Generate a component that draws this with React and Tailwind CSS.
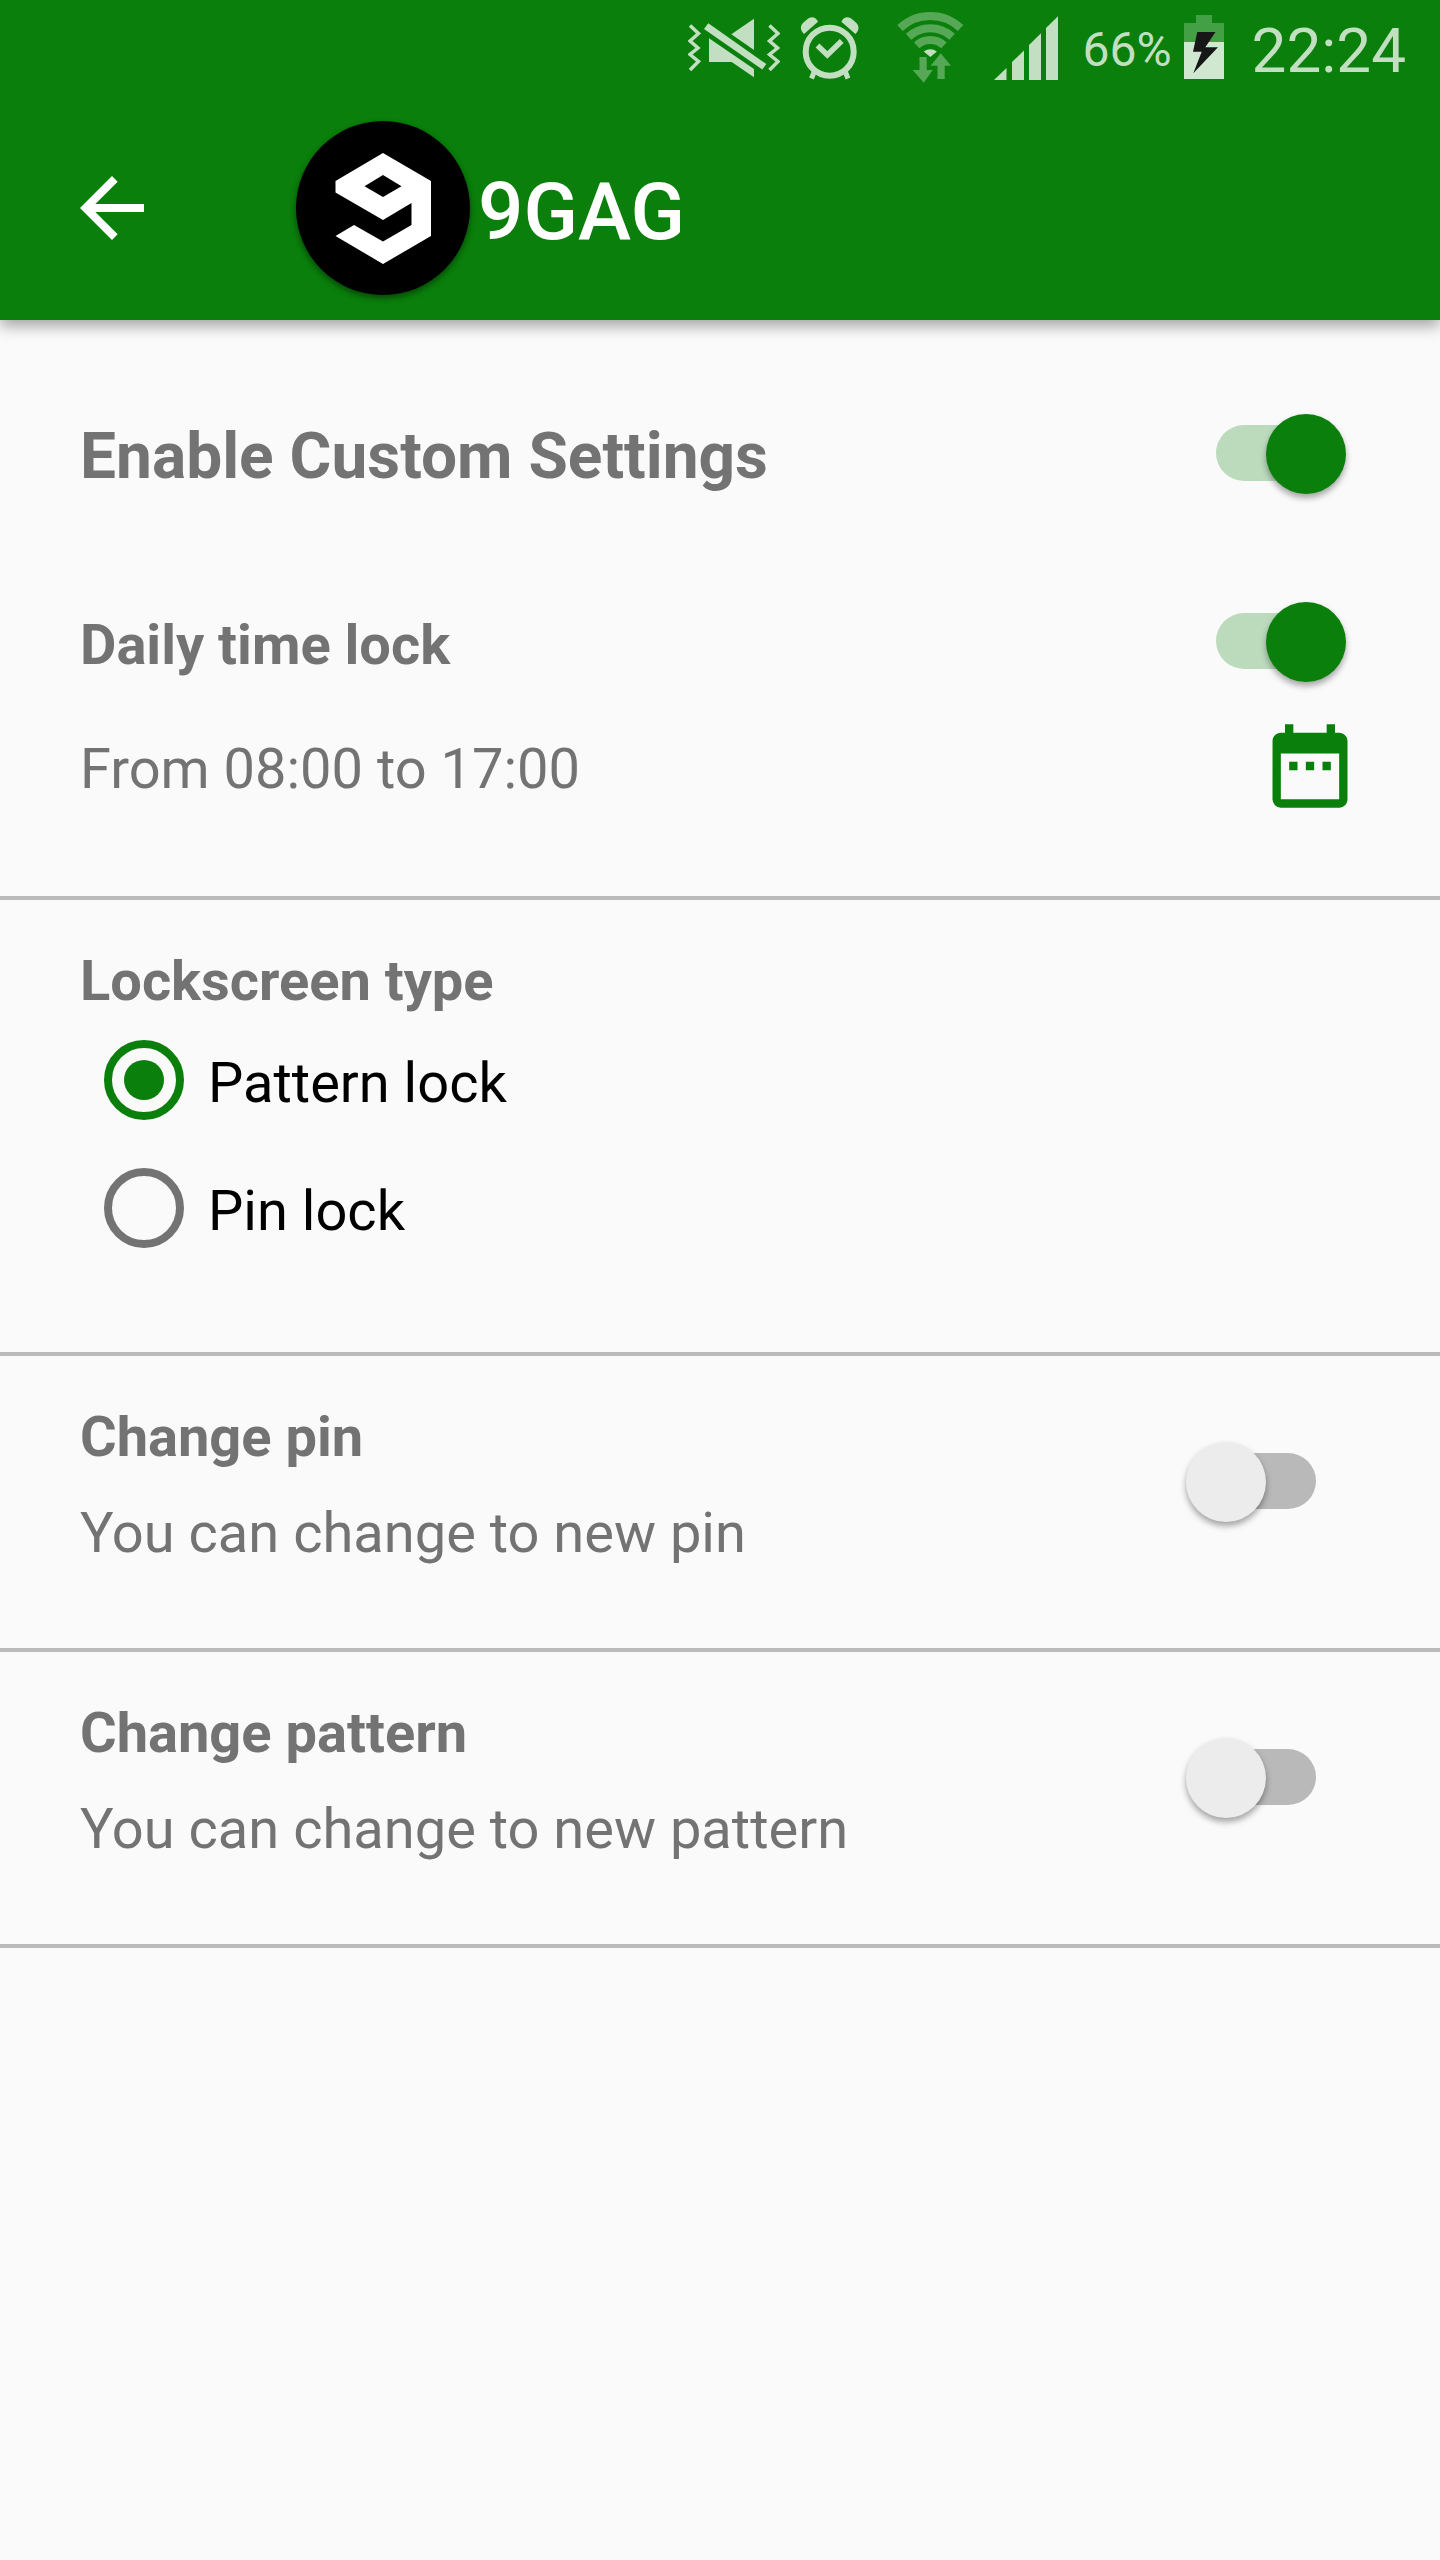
import { useState } from 'react';
import { MdArrowBack, MdDateRange } from 'react-icons/md';

function VibrateIcon() {
  const zigzag = 'M2 25.5 10.5 33.5 2 41 10 48 2 54.5 10.5 61.5 2 70';
  return (
    <svg className="h-24 w-[92px]" viewBox="0 0 92 96" fill="currentColor" aria-hidden="true">
      <path d={zigzag} fill="none" stroke="currentColor" strokeWidth="3.5" />
      <path d={zigzag} transform="translate(79.5 0)" fill="none" stroke="currentColor" strokeWidth="3.5" />
      <path d="M20.3 23.3 78.3 64 74.3 69.6 16 29Z" />
      <path d="M66 18.7V50L43.3 34.3Z" />
      <path d="M21 38.3 66 69V77.3L43.7 62H21Z" />
    </svg>
  );
}

function AlarmIcon() {
  return (
    <svg className="h-24 w-[60px]" viewBox="0 0 60 96" fill="none" stroke="currentColor" aria-hidden="true">
      <circle cx="29.7" cy="51.7" r="24" strokeWidth="6" />
      <path d="M17.5 45.5 27.3 55 41.7 41" strokeWidth="5.5" />
      <path d="M14.5 71 11.5 78.5M45 71 48 78.5" strokeWidth="5" />
      <path d="M4 34 18 21.7C15.5 16.5 11 16 7 19.5L3.5 22.5C-.5 26 .5 31 4 34Z" fill="currentColor" stroke="none" />
      <path d="M55.4 34 41.4 21.7C43.9 16.5 48.4 16 52.4 19.5L55.9 22.5C59.9 26 58.9 31 55.4 34Z" fill="currentColor" stroke="none" />
    </svg>
  );
}

function WifiIcon() {
  return (
    <svg className="h-24 w-[68px]" viewBox="0 0 68 96" fill="none" aria-hidden="true">
      <g stroke="#56a856" strokeWidth="8">
        <path d="M4 28A44 44 0 0 1 64.6 28" />
        <path d="M12.5 36.7A32 32 0 0 1 56.1 36.7" />
        <path d="M20.7 45.4A20 20 0 0 1 47.9 45.4" />
      </g>
      <path d="M27.7 51.5A12 12 0 0 1 40.9 51.5L34.3 57Z" fill="#c2dfc2" />
      <path d="M23.5 57H30.7V70H36.7L27.7 82.7 16.7 70H23.5Z" fill="#56a856" />
      <path d="M44.7 53.3 55 65.7H48.7V79H41.5V65.7H34.7Z" fill="#56a856" />
    </svg>
  );
}

function SignalIcon() {
  return (
    <svg className="h-24 w-16" viewBox="0 0 64 96" fill="currentColor" aria-hidden="true">
      <path d="M0 80 12.5 68V80Z" />
      <path d="M18 80V62L30 50.5V80Z" />
      <path d="M35 80V45L47 33.3V80Z" />
      <path d="M52 80V28L64 16.3V80Z" />
    </svg>
  );
}

function BatteryIcon() {
  return (
    <svg className="h-24 w-10" viewBox="0 0 40 96" aria-hidden="true">
      <path d="M12 15H28V23H40V42H0V23H12Z" fill="#44a044" />
      <path d="M0 42H40V79H0Z" fill="#d0e7d0" />
      <path d="M13.3 32H31.5L21.3 47.3H34L9.3 73.3 17.7 51.7H9Z" fill="#171717" />
    </svg>
  );
}

function AppLogo() {
  return (
    <svg
      className="size-[174px] shrink-0 rounded-full bg-black shadow-[0_3px_6px_rgba(0,0,0,0.45)]"
      viewBox="0 0 174 174"
      fill="#fff"
      fillRule="evenodd"
      aria-hidden="true"
    >
      <path d="M87 32 135 60V115L87 143 39.5 115 58 104 87 120.5 115.5 104V82L87 99 39.5 71.5V60ZM87 54 68.5 65.3 87 76 105.5 65.3Z" />
    </svg>
  );
}

function StatusBar() {
  return (
    <div className="flex h-24 items-center justify-end pr-[34px] text-[#c2dfc2]">
      <VibrateIcon />
      <span className="ml-5"><AlarmIcon /></span>
      <span className="ml-9"><WifiIcon /></span>
      <span className="ml-[30px]"><SignalIcon /></span>
      <span className="ml-6 pt-1 text-5xl">66%</span>
      <span className="ml-3"><BatteryIcon /></span>
      <time className="ml-7 pt-1.5 text-[62px]">22:24</time>
    </div>
  );
}

function Switch({ id, checked, onChange, className }) {
  return (
    <span className={`flex pb-1.5 ${className}`}>
      <input
        id={id}
        type="checkbox"
        role="switch"
        checked={checked}
        onChange={(e) => onChange(e.target.checked)}
        className="relative h-20 w-[130px] shrink-0 cursor-pointer appearance-none before:absolute before:top-[11px] before:right-0 before:h-14 before:w-[116px] before:rounded-full before:bg-[#b9b9b9] after:absolute after:top-0 after:left-0 after:size-20 after:rounded-full after:bg-[#ececec] after:shadow-[0_4px_6px_rgba(0,0,0,0.35)] checked:before:right-auto checked:before:left-0 checked:before:bg-[#bcdbbd] checked:after:right-0 checked:after:left-auto checked:after:bg-[#0a7f0b]"
      />
    </span>
  );
}

function RadioOption({ value, label, selected, onSelect }) {
  return (
    <label className="flex h-32 items-center gap-6 pl-6 text-black">
      <input
        type="radio"
        name="lockscreen"
        value={value}
        checked={selected === value}
        onChange={() => onSelect(value)}
        className="grid size-20 shrink-0 appearance-none place-items-center rounded-full border-8 border-[#737373] checked:border-[#0a7f0b] checked:before:size-10 checked:before:rounded-full checked:before:bg-[#0a7f0b]"
      />
      <span className="pt-1.5">{label}</span>
    </label>
  );
}

function ChangeRow({ id, title, description }) {
  const [on, setOn] = useState(false);

  return (
    <section className="flex items-center justify-between border-b-4 border-[#bbbbbb] px-20 pt-12 pb-[82px]">
      <div className="flex flex-col gap-[30px]">
        <label htmlFor={id} className="font-bold">{title}</label>
        <p>{description}</p>
      </div>
      <Switch id={id} checked={on} onChange={setOn} className="mr-11" />
    </section>
  );
}

export default function App() {
  const [custom, setCustom] = useState(true);
  const [daily, setDaily] = useState(true);
  const [lockType, setLockType] = useState('pattern');

  return (
    <div className="min-h-screen bg-[#fafafa] font-[Roboto,sans-serif] text-[56px] leading-[66px] text-[#737373]">
      <header className="relative bg-[#0a7f0b] shadow-[0_6px_14px_rgba(0,0,0,0.35)]">
        <StatusBar />
        <div className="flex h-56 items-center px-16 text-white">
          <button type="button" aria-label="Back" className="mr-[136px]">
            <MdArrowBack size={96} />
          </button>
          <AppLogo />
          <h1 className="ml-2 pt-2 text-[80px] leading-[94px] font-medium">9GAG</h1>
        </div>
      </header>

      <main>
        <section className="border-b-4 border-[#bbbbbb] px-20 pt-[94px] pb-[74px]">
          <div className="flex items-center justify-between">
            <label htmlFor="custom" className="text-[64px] leading-[78px] font-bold">Enable Custom Settings</label>
            <Switch id="custom" checked={custom} onChange={setCustom} className="mr-3.5" />
          </div>
          <div className="mt-[102px] flex items-center justify-between">
            <label htmlFor="daily" className="font-bold">Daily time lock</label>
            <Switch id="daily" checked={daily} onChange={setDaily} className="mr-3.5" />
          </div>
          <div className="mt-7 flex items-center justify-between">
            <p>From 08:00 to 17:00</p>
            <button type="button" aria-label="Choose hours" className="pb-1.5 text-[#0a7f0b]">
              <MdDateRange size={100} />
            </button>
          </div>
        </section>

        <fieldset className="border-b-4 border-[#bbbbbb] px-20 pt-12 pb-20">
          <legend className="float-left mb-0.5 w-full font-bold">Lockscreen type</legend>
          <div className="clear-both">
            <RadioOption value="pattern" label="Pattern lock" selected={lockType} onSelect={setLockType} />
            <RadioOption value="pin" label="Pin lock" selected={lockType} onSelect={setLockType} />
          </div>
        </fieldset>

        <ChangeRow id="change-pin" title="Change pin" description="You can change to new pin" />
        <ChangeRow id="change-pattern" title="Change pattern" description="You can change to new pattern" />
      </main>
    </div>
  );
}
